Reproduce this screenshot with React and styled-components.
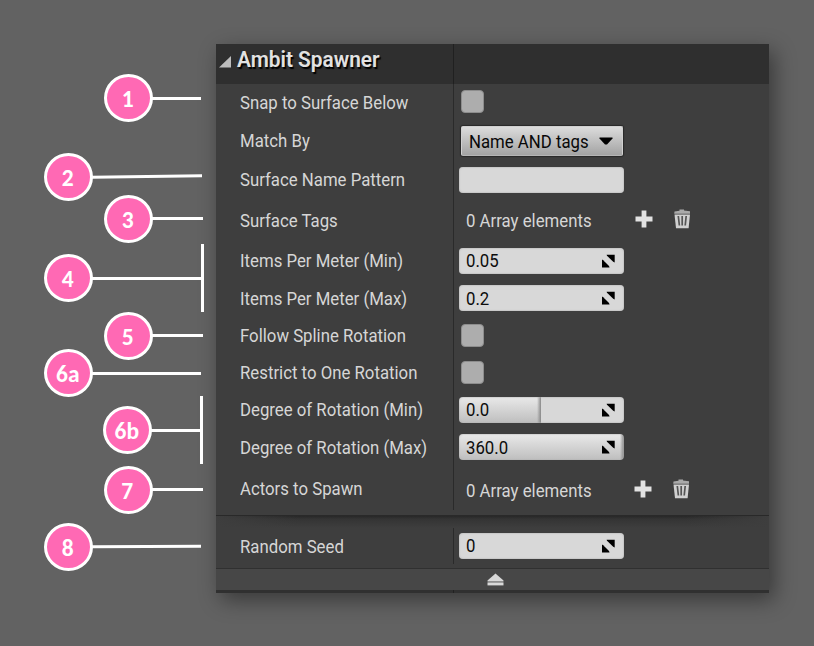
import React from "react";
import styled, { createGlobalStyle } from "styled-components";

const Global = createGlobalStyle`
  * { box-sizing: border-box; }
  body { margin: 0; background: #626262; }
`;

const Page = styled.main`
  position: relative;
  width: 814px;
  height: 646px;
  overflow: hidden;
  background: #626262;
  padding: 44px 45px 0 216px;
  font-family: Roboto, "Liberation Sans", sans-serif;
  font-size: 18px;
  color: #d6d6d6;
`;

const Panel = styled.section`
  display: flex;
  flex-direction: column;
  width: 553px;
  height: 549px;
  background: #3e3e3e;
  box-shadow: 5px 7px 20px rgba(0, 0, 0, 0.42);
`;

const Narrow = styled.span`
  display: inline-block;
  transform: scaleX(${(p) => p.$scale || 0.932});
  transform-origin: left center;
  white-space: nowrap;
`;

const Header = styled.header`
  display: flex;
  height: 40px;
  flex: none;
  background: #2f2f2f;
`;

const Title = styled.h1`
  display: flex;
  align-items: center;
  gap: 6px;
  width: 238px;
  margin: 0;
  padding: 0 0 8px 3px;
  border-right: 1px solid #202020;
  font-size: 22px;
  line-height: 24px;
  font-weight: 600;
  color: #e2e2e2;
  text-shadow: 1.5px 1.5px 1px #000;
  svg { margin-top: 4px; flex: none; }
`;

const Row = styled.div`
  display: flex;
  flex: none;
  height: ${(p) => p.$height}px;
`;

const Label = styled.div`
  display: flex;
  align-items: center;
  width: 238px;
  padding-left: 24px;
  padding-bottom: ${(p) => p.$lift ?? 1}px;
  border-right: 1px solid #2a2a2a;
`;

const Value = styled.div`
  display: flex;
  align-items: center;
  padding-left: 5px;
`;

const Checkbox = styled.span`
  width: 23px;
  height: 23px;
  margin-left: 1.5px;
  margin-top: ${(p) => p.$up ? "-2px" : "0"};
  border: 1px solid #8d8d8d;
  border-radius: 4px;
  background: #adadad;
`;

const Select = styled.button`
  display: flex;
  align-items: center;
  width: 162px;
  height: 30px;
  margin-left: 1.5px;
  padding: 0 9px 0 7px;
  border: 1px solid #d0d0d0;
  border-bottom-color: #b5b5b5;
  border-radius: 2px;
  background: linear-gradient(#dcdcdc, #a3a3a3);
  box-shadow: 0 0 1px 1px #292929;
  font: inherit;
  color: #080808;
`;

const SelectText = styled.span`
  width: 130px;
  flex: none;
  text-align: left;
`;

const Field = styled.div`
  display: flex;
  align-items: center;
  justify-content: space-between;
  width: 165px;
  height: 26px;
  margin-top: -1px;
  padding: 0 9px 0 7px;
  border-radius: 4px;
  background: #d8d8d8;
  box-shadow: inset 0 0 1px 1px rgba(175, 175, 175, 0.4);
  color: #0c0c0c;
`;

const SliderField = styled(Field)`
  background: linear-gradient(to right, transparent calc(${(p) => p.$fill} - 4px), #888 ${(p) => p.$fill}, #d8d8d8 ${(p) => p.$fill}),
    linear-gradient(#e9e9e9, #bebebe);
`;

const ArrayValue = styled.div`
  display: flex;
  align-items: center;
  padding-left: 7px;
  padding-top: ${(p) => p.$drop || 0}px;
`;

const ArrayText = styled.span`
  width: 169px;
`;

const Tools = styled.span`
  display: flex;
  align-items: center;
  gap: 20px;
  margin-top: -3px;
  margin-left: ${(p) => p.$shift || 0}px;
`;

const Separator = styled.div`
  flex: none;
  height: 13px;
  margin-top: 5px;
  border-top: 1px solid #292929;
  background: linear-gradient(to right, #3e3e3e, transparent 15%, transparent 85%, #3e3e3e),
    linear-gradient(#272727, #343434 3px, #3e3e3e 12px);
`;

const Footer = styled.footer`
  display: flex;
  flex: none;
  align-items: center;
  height: 22px;
  margin-top: 4px;
  padding-left: 271px;
  border-top: 1px solid #303030;
  background: #474747;
`;

const Base = styled.div`
  flex: 1;
  width: 100%;
  background: linear-gradient(to right, transparent 237px, #222 237px, #222 238px, transparent 238px), #303030;
`;

const Badge = styled.span`
  position: absolute;
  left: ${(p) => p.$x - 24.5}px;
  top: ${(p) => p.$y - 24}px;
  display: flex;
  align-items: center;
  justify-content: center;
  width: 49px;
  height: 48px;
  padding-right: 1.5px;
  padding-top: 2px;
  border: 3px solid #fff;
  border-radius: 50%;
  background: #ff69b4;
  color: #fff;
  font: bold 23.5px Carlito, Lato, sans-serif;
`;

const Leader = styled.span`
  position: absolute;
  left: ${(p) => p.$from}px;
  top: ${(p) => p.$y}px;
  width: ${(p) => p.$to - p.$from}px;
  height: 3px;
  background: #fff;
  transform: rotate(${(p) => p.$tilt || 0}deg);
`;

const Bracket = styled.span`
  position: absolute;
  left: ${(p) => p.$x}px;
  top: ${(p) => p.$y}px;
  width: 3px;
  height: 68px;
  background: #fff;
`;

const Triangle = () => (
  <svg width="12" height="12" viewBox="0 0 12 12">
    <path d="M12 0V11.5H0Z" fill="#bdbdbd" />
  </svg>
);

const Caret = () => (
  <svg width="14" height="8" viewBox="0 0 14 8">
    <path d="M0.5 0.5H13.5V1.5L8 7.5H6L0.5 1.5Z" fill="#000" />
  </svg>
);

const Grip = () => (
  <svg width="14" height="14" viewBox="0 0 14 14" fill="#000">
    <path d="M5.6 0.7H13.7V8.6L12.2 7.8L6 1.8Z" />
    <path d="M1 5.5L2.2 6.3L8 12L8.6 13.5H1Z" />
  </svg>
);

const Plus = () => (
  <svg width="18" height="18" viewBox="0 0 18 18">
    <path d="M6.6 0.5H11.4V6.6H17.5V11.4H11.4V17.5H6.6V11.4H0.5V6.6H6.6Z" fill="#e2e2e2" />
  </svg>
);

const Trash = () => (
  <svg width="18" height="20" viewBox="0 0 18 20">
    <path d="M1.5 2.5L6.5 1.8V0.5H11V1.6L17 2.2V4.8H1.2Z" fill="#aaa" />
    <path d="M1.5 5.4H17L15.6 19.3H3Z" fill="#d0d0d0" />
    <path d="M5.3 7L6.4 16.5M9.2 7V16.5M13.2 7L12.2 16.5" stroke="#555" strokeWidth="1.7" />
  </svg>
);

const Eject = () => (
  <svg width="17" height="13" viewBox="0 0 17 13" fill="#d8d8d8">
    <path d="M8.5 0.5L16.5 7.5V8.6H0.5V7.5Z" />
    <path d="M0.5 9.4H16.5V12.4H0.5Z" />
  </svg>
);

const ArrayControl = ({ drop, shift }) => (
  <ArrayValue $drop={drop}>
    <ArrayText><Narrow>0 Array elements</Narrow></ArrayText>
    <Tools $shift={shift}><Plus /><Trash /></Tools>
  </ArrayValue>
);

const NumberField = ({ children }) => <Field><Narrow>{children}</Narrow><Grip /></Field>;

const SliderInput = ({ fill, children }) => (
  <SliderField $fill={fill}><Narrow>{children}</Narrow><Grip /></SliderField>
);

const rows = [
  { label: "Snap to Surface Below", height: 37, control: <Checkbox $up /> },
  { label: "Match By", height: 40, control: <Select><SelectText><Narrow>Name AND tags</Narrow></SelectText><Caret /></Select> },
  { label: "Surface Name Pattern", height: 38, control: <Field /> },
  { label: "Surface Tags", height: 43, control: <ArrayControl /> },
  { label: "Items Per Meter (Min)", height: 38, control: <NumberField>0.05</NumberField> },
  { label: "Items Per Meter (Max)", height: 37, control: <NumberField>0.2</NumberField> },
  { label: "Follow Spline Rotation", height: 37, control: <Checkbox /> },
  { label: "Restrict to One Rotation", height: 37, lift: 0, control: <Checkbox /> },
  { label: "Degree of Rotation (Min)", height: 38, control: <SliderInput fill="82px">0.0</SliderInput> },
  { label: "Degree of Rotation (Max)", height: 37, control: <SliderInput fill="165px">360.0</SliderInput> },
  { label: "Actors to Spawn", height: 44, lift: 0, control: <ArrayControl drop={5} shift={-1} /> },
];

const callouts = [
  { id: "1", x: 128.5, y: 98, lineY: 97, to: 201 },
  { id: "2", x: 68.5, y: 177, lineY: 175, to: 201, tilt: -0.8 },
  { id: "3", x: 128.5, y: 219, lineY: 217, to: 202.5 },
  { id: "4", x: 68.5, y: 278, lineY: 277, to: 201, bracket: [201, 244.4] },
  { id: "5", x: 128.5, y: 336, lineY: 334, to: 202.5 },
  { id: "6a", x: 68.5, y: 373, lineY: 372, to: 201.4 },
  { id: "6b", x: 127.5, y: 430, lineY: 429, to: 201, bracket: [200, 396.4] },
  { id: "7", x: 128, y: 490, lineY: 488, to: 202.5 },
  { id: "8", x: 68.5, y: 547, lineY: 545, to: 200.5, tilt: -0.2 },
];

export default function App() {
  return (
    <Page>
      <Global />
      <Panel>
        <Header>
          <Title><Triangle /><Narrow $scale={0.948}>Ambit Spawner</Narrow></Title>
        </Header>
        {rows.map((r) => (
          <Row key={r.label} $height={r.height}>
            <Label $lift={r.lift}><Narrow>{r.label}</Narrow></Label>
            <Value>{r.control}</Value>
          </Row>
        ))}
        <Separator />
        <Row $height={36}>
          <Label $lift={0}><Narrow>Random Seed</Narrow></Label>
          <Value><NumberField>0</NumberField></Value>
        </Row>
        <Footer><Eject /></Footer>
        <Base />
      </Panel>
      {callouts.map((c) => (
        <React.Fragment key={c.id}>
          <Leader $from={c.x + 23} $to={c.to} $y={c.lineY} $tilt={c.tilt} />
          {c.bracket && <Bracket $x={c.bracket[0]} $y={c.bracket[1]} />}
          <Badge $x={c.x} $y={c.y}>{c.id}</Badge>
        </React.Fragment>
      ))}
    </Page>
  );
}
